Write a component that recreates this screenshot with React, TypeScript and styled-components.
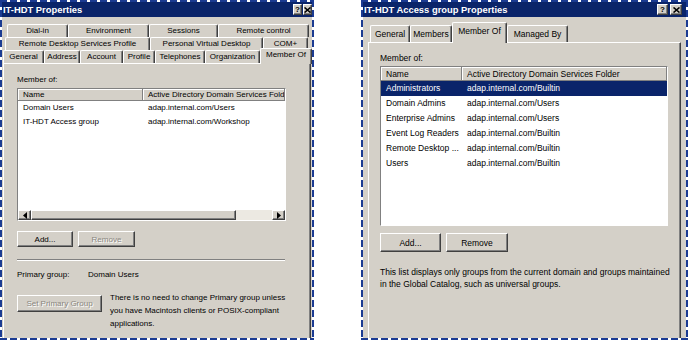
import React from 'react';
import styled, { createGlobalStyle } from 'styled-components';

const GlobalStyle = createGlobalStyle`
  html, body {
    margin: 0;
    padding: 0;
    background: #fff;
  }
  body {
    font-family: "Liberation Sans", Arial, sans-serif;
    color: #000;
  }
`;

const Stage = styled.div`
  width: 688px;
  height: 340px;
  display: flex;
  justify-content: space-between;
`;

const dash = (dir: string) =>
  `repeating-linear-gradient(${dir}, #1b3b92 0 7px, transparent 7px 10px)`;

const Frame = styled.div<{ $width: number }>`
  width: ${({ $width }) => $width}px;
  height: 340px;
  box-sizing: border-box;
  padding: 2px;
  background:
    ${dash('90deg')} top left / 100% 2px no-repeat,
    ${dash('90deg')} bottom left / 100% 2px no-repeat,
    ${dash('180deg')} top left / 2px 100% no-repeat,
    ${dash('180deg')} top right / 2px 100% no-repeat;
`;

const Window = styled.div<{ $size: number }>`
  height: 100%;
  background: #d4d0c8;
  display: flex;
  flex-direction: column;
  overflow: hidden;
  font-size: ${({ $size }) => $size}px;
`;

const TitleBar = styled.div<{ $left: number; $right: number }>`
  height: 15px;
  flex: none;
  display: flex;
  align-items: center;
  padding: 0 ${({ $right }) => $right}px 0 ${({ $left }) => $left}px;
  background: #0a246a;
  color: #fff;
  font-weight: bold;
  font-size: 9.4px;
`;

const TitleText = styled.span`
  flex: 1;
  white-space: nowrap;
`;

const CaptionButton = styled.span<{ $w: number; $gap: number }>`
  width: ${({ $w }) => $w}px;
  height: 11px;
  flex: none;
  box-sizing: border-box;
  margin-left: ${({ $gap }) => $gap}px;
  background: #d4d0c8;
  border: 1px solid;
  border-color: #fff #404040 #404040 #fff;
  box-shadow: inset -1px -1px #808080;
  display: flex;
  align-items: center;
  justify-content: center;
  color: #000;
  font-size: 8px;
  font-weight: bold;
  line-height: 1;
`;

const Body = styled.div<{ $top: number; $left: number; $right: number }>`
  flex: 1;
  min-height: 0;
  display: flex;
  flex-direction: column;
  padding: ${({ $top, $right, $left }) => `${$top}px ${$right}px 0 ${$left}px`};
`;

const TabRow = styled.div<{ $offset: number; $h: number }>`
  display: flex;
  height: ${({ $h }) => $h}px;
  padding-left: ${({ $offset }) => $offset}px;
  flex: none;
`;

const Tab = styled.div<{ $w: number; $active?: boolean; $raise: number; $pad: number }>`
  width: ${({ $w }) => $w}px;
  flex: none;
  box-sizing: border-box;
  border-top: 1px solid #fff;
  border-left: 1px solid #fff;
  border-right: 1px solid #404040;
  border-radius: 2px 2px 0 0;
  box-shadow: inset -1px 0 #808080;
  background: #d4d0c8;
  text-align: center;
  white-space: nowrap;
  overflow: hidden;
  padding-top: ${({ $pad }) => $pad}px;
  position: relative;
  ${({ $active, $raise }) =>
    $active
      ? `
    margin-top: -${$raise}px;
    height: calc(100% + ${$raise + 1}px);
    z-index: 2;
  `
      : 'height: 100%;'}
`;

const Panel = styled.div<{ $top: number; $left: number }>`
  flex: 1;
  min-height: 0;
  display: flex;
  flex-direction: column;
  border-top: 1px solid #fff;
  border-left: 1px solid #fff;
  border-right: 1px solid #404040;
  box-shadow: inset -1px 0 #808080;
  padding: ${({ $top }) => $top}px 0 0 ${({ $left }) => $left}px;
`;

const Label = styled.div`
  height: 12px;
  line-height: 12px;
  white-space: nowrap;
`;

const ListView = styled.div<{ $w: number; $h: number; $mt: number }>`
  width: ${({ $w }) => $w}px;
  height: ${({ $h }) => $h}px;
  margin-top: ${({ $mt }) => $mt}px;
  flex: none;
  box-sizing: border-box;
  border: 1px solid;
  border-color: #808080 #fff #fff #808080;
  background: #fff;
  display: flex;
  flex-direction: column;
  overflow: hidden;
`;

const ListRow = styled.div<{ $cols: string; $h: number; $selected?: boolean }>`
  display: grid;
  grid-template-columns: ${({ $cols }) => $cols};
  height: ${({ $h }) => $h}px;
  line-height: ${({ $h }) => $h}px;
  flex: none;
  white-space: nowrap;
  background: ${({ $selected }) => ($selected ? '#0a246a' : 'transparent')};
  color: ${({ $selected }) => ($selected ? '#fff' : '#000')};
`;

const HeaderCell = styled.div`
  background: #d4d0c8;
  box-sizing: border-box;
  border-right: 1px solid #808080;
  border-bottom: 1px solid #808080;
  box-shadow: inset 1px 1px #fff;
  padding-left: 5px;
  overflow: hidden;
  line-height: inherit;
`;

const Cell = styled.div`
  padding-left: 5px;
  overflow: hidden;
`;

const HScroll = styled.div`
  margin-top: auto;
  height: 10px;
  flex: none;
  display: flex;
  background: #ece9e2;
`;

const Raised = styled.div<{ $w: number }>`
  width: ${({ $w }) => $w}px;
  flex: none;
  box-sizing: border-box;
  background: #d4d0c8;
  border: 1px solid;
  border-color: #fff #404040 #404040 #fff;
  box-shadow: inset -1px -1px #808080;
  display: flex;
  align-items: center;
  justify-content: center;
`;

const Track = styled.div`
  flex: 1;
`;

const ButtonRow = styled.div<{ $mt: number; $gap: number }>`
  display: flex;
  gap: ${({ $gap }) => $gap}px;
  margin-top: ${({ $mt }) => $mt}px;
  flex: none;
`;

const Button = styled.div<{ $w: number; $h: number; $disabled?: boolean; $mt?: number }>`
  width: ${({ $w }) => $w}px;
  height: ${({ $h }) => $h}px;
  margin-top: ${({ $mt }) => $mt ?? 0}px;
  flex: none;
  box-sizing: border-box;
  background: #d4d0c8;
  border: 1px solid;
  border-color: #fff #404040 #404040 #fff;
  box-shadow: inset -1px -1px #808080;
  display: flex;
  align-items: center;
  justify-content: center;
  white-space: nowrap;
  color: ${({ $disabled }) => ($disabled ? '#8a877f' : '#000')};
  text-shadow: ${({ $disabled }) => ($disabled ? '1px 1px #fff' : 'none')};
`;

const Separator = styled.div`
  width: 268px;
  margin-top: 12px;
  border-top: 1px solid #808080;
  border-bottom: 1px solid #fff;
  flex: none;
`;

const InfoRow = styled.div<{ $mt: number }>`
  display: flex;
  margin-top: ${({ $mt }) => $mt}px;
  height: 12px;
  line-height: 12px;
  flex: none;
`;

const InfoKey = styled.span`
  width: 71px;
`;

const FootRow = styled.div`
  display: flex;
  align-items: flex-start;
  gap: 8px;
  margin-top: 10px;
  flex: none;
`;

const Note = styled.div<{ $lh: number; $mt?: number }>`
  line-height: ${({ $lh }) => $lh}px;
  white-space: nowrap;
  margin-top: ${({ $mt }) => $mt ?? 0}px;
`;

const Arrow = ({ dir }: { dir: 'left' | 'right' }) => (
  <svg width="4" height="7" viewBox="0 0 4 7">
    <path d={dir === 'left' ? 'M4 0 L0 3.5 L4 7 Z' : 'M0 0 L4 3.5 L0 7 Z'} fill="#000" />
  </svg>
);

const CloseGlyph = () => (
  <svg width="7" height="6" viewBox="0 0 7 6">
    <path d="M0.5 0.5 L6.5 5.5 M6.5 0.5 L0.5 5.5" stroke="#000" strokeWidth="1.6" />
  </svg>
);

type TabDef = [string, number, boolean?];

const leftTabRows: { offset: number; tabs: TabDef[] }[] = [
  { offset: 4, tabs: [['Dial-in', 61], ['Environment', 81], ['Sessions', 69], ['Remote control', 91]] },
  {
    offset: 2,
    tabs: [['Remote Desktop Services Profile', 145], ['Personal Virtual Desktop', 113], ['COM+', 45]],
  },
  {
    offset: 0,
    tabs: [
      ['General', 41],
      ['Address', 36],
      ['Account', 43],
      ['Profile', 32],
      ['Telephones', 50],
      ['Organization', 55],
      ['Member Of', 52, true],
    ],
  },
];

const rightTabs: TabDef[] = [
  ['General', 40],
  ['Members', 42],
  ['Member Of', 55, true],
  ['Managed By', 61],
];

const userGroups = [
  ['Domain Users', 'adap.internal.com/Users'],
  ['IT-HDT Access group', 'adap.internal.com/Workshop'],
];

const accessGroups = [
  ['Administrators', 'adap.internal.com/Builtin'],
  ['Domain Admins', 'adap.internal.com/Users'],
  ['Enterprise Admins', 'adap.internal.com/Users'],
  ['Event Log Readers', 'adap.internal.com/Builtin'],
  ['Remote Desktop ...', 'adap.internal.com/Builtin'],
  ['Users', 'adap.internal.com/Builtin'],
];

function UserProperties() {
  const cols = '125px 1fr';
  return (
    <Frame $width={314}>
      <Window $size={8}>
        <TitleBar $left={1} $right={0}>
          <TitleText>IT-HDT Properties</TitleText>
          <CaptionButton $w={9} $gap={0}>?</CaptionButton>
          <CaptionButton $w={9} $gap={1}>
            <CloseGlyph />
          </CaptionButton>
        </TitleBar>
        <Body $top={7} $left={1} $right={1}>
          {leftTabRows.map((row, i) => (
            <TabRow key={i} $offset={row.offset} $h={13}>
              {row.tabs.map(([name, w, active]) => (
                <Tab key={name} $w={w} $active={active} $raise={2} $pad={1}>
                  {name}
                </Tab>
              ))}
            </TabRow>
          ))}
          <Panel $top={10} $left={13}>
            <Label>Member of:</Label>
            <ListView $w={269} $h={133} $mt={2}>
              <ListRow $cols={cols} $h={12}>
                <HeaderCell>Name</HeaderCell>
                <HeaderCell>Active Directory Domain Services Folder</HeaderCell>
              </ListRow>
              {userGroups.map(([name, folder]) => (
                <ListRow key={name} $cols={cols} $h={14}>
                  <Cell>{name}</Cell>
                  <Cell>{folder}</Cell>
                </ListRow>
              ))}
              <HScroll>
                <Raised $w={13}>
                  <Arrow dir="left" />
                </Raised>
                <Raised $w={205} />
                <Track />
                <Raised $w={13}>
                  <Arrow dir="right" />
                </Raised>
              </HScroll>
            </ListView>
            <ButtonRow $mt={10} $gap={5}>
              <Button $w={56} $h={16}>Add...</Button>
              <Button $w={57} $h={16} $disabled>
                Remove
              </Button>
            </ButtonRow>
            <Separator />
            <InfoRow $mt={8}>
              <InfoKey>Primary group:</InfoKey>
              <span>Domain Users</span>
            </InfoRow>
            <FootRow>
              <Button $w={85} $h={17} $mt={4} $disabled>
                Set Primary Group
              </Button>
              <Note $lh={13}>
                There is no need to change Primary group unless
                <br />
                you have Macintosh clients or POSIX-compliant
                <br />
                applications.
              </Note>
            </FootRow>
          </Panel>
        </Body>
      </Window>
    </Frame>
  );
}

function GroupProperties() {
  const cols = '81px 1fr';
  return (
    <Frame $width={327}>
      <Window $size={8.5}>
        <TitleBar $left={1} $right={4}>
          <TitleText>IT-HDT Access group Properties</TitleText>
          <CaptionButton $w={11} $gap={0}>?</CaptionButton>
          <CaptionButton $w={12} $gap={2}>
            <CloseGlyph />
          </CaptionButton>
        </TitleBar>
        <Body $top={8} $left={5} $right={5}>
          <TabRow $offset={2} $h={17}>
            {rightTabs.map(([name, w, active]) => (
              <Tab key={name} $w={w} $active={active} $raise={3} $pad={3}>
                {name}
              </Tab>
            ))}
          </TabRow>
          <Panel $top={9} $left={11}>
            <Label>Member of:</Label>
            <ListView $w={288} $h={160} $mt={2}>
              <ListRow $cols={cols} $h={14}>
                <HeaderCell>Name</HeaderCell>
                <HeaderCell>Active Directory Domain Services Folder</HeaderCell>
              </ListRow>
              {accessGroups.map(([name, folder], i) => (
                <ListRow key={name} $cols={cols} $h={15} $selected={i === 0}>
                  <Cell>{name}</Cell>
                  <Cell>{folder}</Cell>
                </ListRow>
              ))}
            </ListView>
            <ButtonRow $mt={7} $gap={5}>
              <Button $w={61} $h={19}>Add...</Button>
              <Button $w={62} $h={19}>Remove</Button>
            </ButtonRow>
            <Note $lh={12} $mt={14}>
              This list displays only groups from the current domain and groups maintained
              <br />
              in the Global Catalog, such as universal groups.
            </Note>
          </Panel>
        </Body>
      </Window>
    </Frame>
  );
}

export default function App() {
  return (
    <>
      <GlobalStyle />
      <Stage>
        <UserProperties />
        <GroupProperties />
      </Stage>
    </>
  );
}
